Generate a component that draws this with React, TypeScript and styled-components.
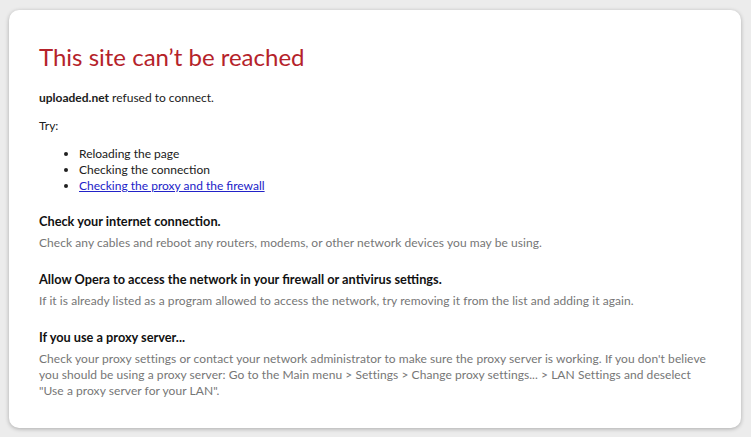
import React from "react";
import styled, { createGlobalStyle } from "styled-components";

const GlobalStyle = createGlobalStyle`
  html, body {
    margin: 0;
    padding: 0;
    background: #ececec;
  }
  body {
    font-family: Lato, "Noto Sans", sans-serif;
  }
`;

const Page = styled.div`
  width: 751px;
  height: 437px;
  padding: 10px 10px 9px 9px;
  box-sizing: border-box;
  display: flex;
`;

const Card = styled.main`
  flex: 1;
  background: #fff;
  border-radius: 10px;
  box-shadow: 0 1px 4px rgba(0, 0, 0, 0.28);
  padding: 30px 30px 0 30px;
  color: #202020;
  font-size: 12px;
`;

const Title = styled.h1`
  margin: 0 0 16px;
  font-weight: 400;
  font-size: 24px;
  line-height: 34px;
  color: #b5222a;
`;

const Line = styled.p`
  margin: 0 0 12px;
  line-height: 16px;
`;

const Tips = styled.ul`
  margin: 0 0 19px;
  padding-left: 40px;
  line-height: 16px;
`;

const Link = styled.a`
  color: #2222c8;
  text-decoration: underline;
`;

const Section = styled.section`
  margin-bottom: 20px;
`;

const Heading = styled.h2`
  margin: 0 0 6px;
  font-size: 12.75px;
  font-weight: 700;
  line-height: 16px;
  color: #111;
`;

const Hint = styled.p`
  margin: 0;
  line-height: 16px;
  letter-spacing: 0.06px;
  color: #767676;
`;

const sections = [
  {
    title: "Check your internet connection.",
    text: "Check any cables and reboot any routers, modems, or other network devices you may be using.",
  },
  {
    title: "Allow Opera to access the network in your firewall or antivirus settings.",
    text: "If it is already listed as a program allowed to access the network, try removing it from the list and adding it again.",
  },
  {
    title: "If you use a proxy server...",
    text: 'Check your proxy settings or contact your network administrator to make sure the proxy server is working. If you don\'t believe you should be using a proxy server: Go to the Main menu > Settings > Change proxy settings... > LAN Settings and deselect "Use a proxy server for your LAN".',
  },
];

export default function App() {
  return (
    <Page>
      <GlobalStyle />
      <Card>
        <Title>This site can’t be reached</Title>
        <Line>
          <b>uploaded.net</b> refused to connect.
        </Line>
        <Line>Try:</Line>
        <Tips>
          <li>Reloading the page</li>
          <li>Checking the connection</li>
          <li>
            <Link href="#">Checking the proxy and the firewall</Link>
          </li>
        </Tips>
        {sections.map((s) => (
          <Section key={s.title}>
            <Heading>{s.title}</Heading>
            <Hint>{s.text}</Hint>
          </Section>
        ))}
      </Card>
    </Page>
  );
}
